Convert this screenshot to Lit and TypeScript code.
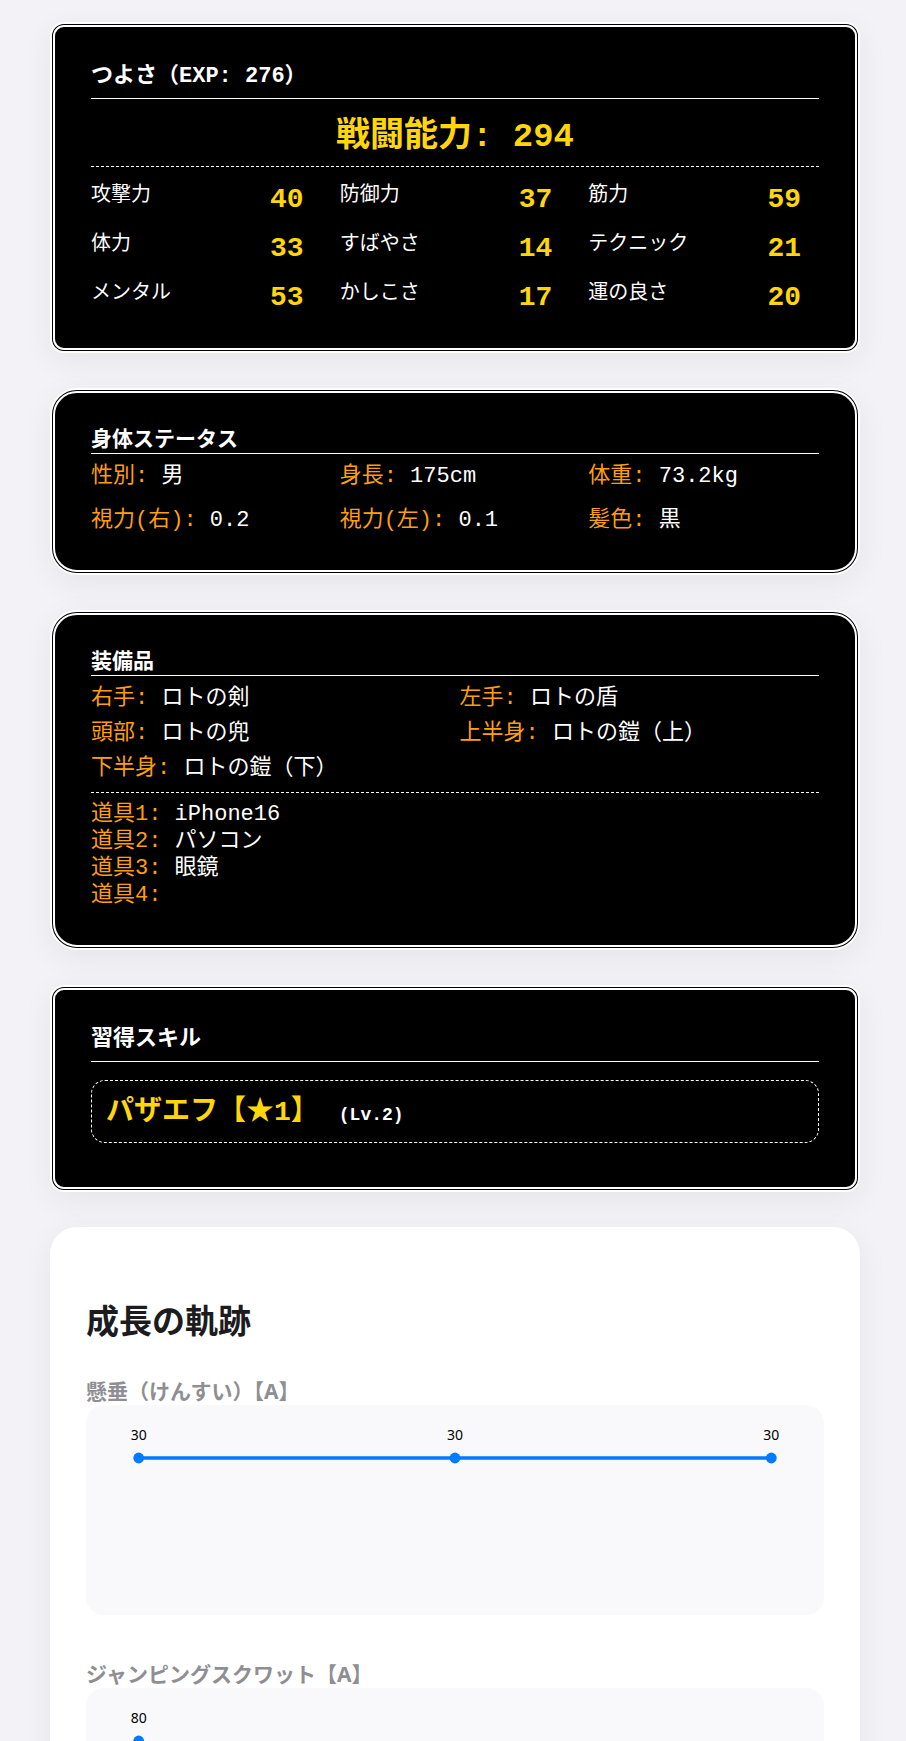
import { LitElement, html, svg, css } from "lit";
import { customElement, property } from "lit/decorators.js";

interface Entry {
  label: string;
  value: string | number;
}

const STATS: Entry[] = [
  { label: "攻撃力", value: 40 },
  { label: "防御力", value: 37 },
  { label: "筋力", value: 59 },
  { label: "体力", value: 33 },
  { label: "すばやさ", value: 14 },
  { label: "テクニック", value: 21 },
  { label: "メンタル", value: 53 },
  { label: "かしこさ", value: 17 },
  { label: "運の良さ", value: 20 },
];

const BODY: Entry[] = [
  { label: "性別", value: "男" },
  { label: "身長", value: "175cm" },
  { label: "体重", value: "73.2kg" },
  { label: "視力(右)", value: "0.2" },
  { label: "視力(左)", value: "0.1" },
  { label: "髪色", value: "黒" },
];

const EQUIPMENT: Entry[] = [
  { label: "右手", value: "ロトの剣" },
  { label: "左手", value: "ロトの盾" },
  { label: "頭部", value: "ロトの兜" },
  { label: "上半身", value: "ロトの鎧（上）" },
  { label: "下半身", value: "ロトの鎧（下）" },
];

const ITEMS: Entry[] = [
  { label: "道具1", value: "iPhone16" },
  { label: "道具2", value: "パソコン" },
  { label: "道具3", value: "眼鏡" },
  { label: "道具4", value: "" },
];

@customElement("growth-chart")
export class GrowthChart extends LitElement {
  @property({ type: Array }) values: number[] = [];

  static styles = css`
    :host {
      display: block;
      height: 210px;
      border-radius: 18px;
      background: #f9f9fb;
    }
    .plot {
      display: block;
      width: 100%;
      height: 100%;
    }
    .line {
      stroke: #007aff;
      stroke-width: 3.4;
    }
    .dot {
      fill: #007aff;
    }
    .value {
      font: 14px "Noto Sans", "Open Sans", sans-serif;
      text-anchor: middle;
      fill: #000;
    }
  `;

  render() {
    const max = Math.max(...this.values);
    const points = this.values.map((value, i) => ({
      value,
      x: `${7.14 + i * 42.86}%`,
      y: 53 + (1 - value / max) * 120,
    }));
    return html`<svg class="plot" role="img" aria-label="推移グラフ">
      ${points.slice(1).map(
        (p, i) => svg`<line class="line" x1=${points[i].x} y1=${points[i].y} x2=${p.x} y2=${p.y}></line>`
      )}
      ${points.map(
        (p) => svg`<circle class="dot" cx=${p.x} cy=${p.y} r="5.4"></circle>
          <text class="value" x=${p.x} y=${p.y - 18}>${p.value}</text>`
      )}
    </svg>`;
  }
}

@customElement("app-root")
export class AppRoot extends LitElement {
  static styles = css`
    :host {
      display: block;
      box-sizing: border-box;
      height: 100vh;
      overflow: hidden;
      padding: 22px 46px 0 50px;
      background: #f2f2f7;
      font-family: "Noto Sans", "Noto Sans CJK JP", sans-serif;
    }
    * {
      box-sizing: border-box;
    }
    h2,
    h3,
    dl,
    dd,
    p {
      margin: 0;
    }
    .page {
      display: flex;
      flex-direction: column;
      gap: 35px;
    }
    .card {
      padding: 36px;
      border-radius: 27px;
      box-shadow: 0 8px 32px rgba(0, 0, 0, 0.06);
      background: #fff;
    }
    .window {
      border: 5px double #fff;
      background: #000;
      color: #fff;
      font-family: "Courier New", "Liberation Mono", "Noto Sans CJK JP", monospace;
      font-size: 22px;
    }
    .compact {
      border-radius: 14px;
    }
    .heading {
      border-bottom: 1px solid #fff;
      font-size: 21px;
      line-height: 24px;
    }
    .roomy {
      padding-bottom: 7px;
      font-size: 22px;
      line-height: 28px;
    }
    .power {
      padding: 14px 0 4px;
      border-bottom: 1px dashed #fff;
      color: #ffd60a;
      font-size: 34px;
      font-weight: bold;
      line-height: 49px;
      text-align: center;
    }
    .grid {
      display: grid;
      grid-template-columns: repeat(3, 1fr);
      column-gap: 18px;
    }
    .stats {
      row-gap: 9px;
      padding-top: 7px;
      font-size: 20px;
    }
    .stat {
      display: flex;
      justify-content: space-between;
      height: 40px;
      padding-right: 18px;
      line-height: 44px;
    }
    .score {
      color: #ffd60a;
      font-size: 28px;
      font-weight: bold;
      line-height: 52px;
    }
    .body {
      row-gap: 18px;
      padding-top: 10px;
      line-height: 26px;
    }
    .pair {
      display: flex;
      white-space: pre;
    }
    .label {
      color: #ff9f0a;
    }
    .equipment {
      grid-template-columns: repeat(2, 1fr);
      gap: 9px;
      padding: 10px 0;
      border-bottom: 1px dashed #fff;
      line-height: 26px;
    }
    .items {
      padding-top: 8px;
      line-height: 27px;
    }
    .skill {
      display: flex;
      align-items: baseline;
      gap: 20px;
      margin: 18px 0 8px;
      padding: 11px 14px 6px;
      border: 1px dashed #fff;
      border-radius: 14px;
      font-weight: bold;
      line-height: 42px;
    }
    .name {
      color: #ffd60a;
      font-size: 28px;
    }
    .level {
      font-size: 18px;
    }
    .growth {
      padding-top: 70px;
    }
    .title {
      color: #1c1c1e;
      font-size: 33px;
      line-height: 48px;
      margin-bottom: 32px;
    }
    .exercise {
      margin-bottom: 45px;
    }
    .caption {
      color: #8e8e93;
      font-size: 21px;
      line-height: 28px;
    }
  `;

  private pairs(entries: Entry[]) {
    return entries.map(
      (e) => html`<div class="pair"><dt class="label">${e.label}: </dt><dd>${e.value}</dd></div>`
    );
  }

  render() {
    return html`<main class="page">
      <section class="card window compact">
        <h2 class="heading roomy">つよさ（EXP: 276）</h2>
        <p class="power">戦闘能力: 294</p>
        <dl class="grid stats">
          ${STATS.map(
            (s) => html`<div class="stat"><dt>${s.label}</dt><dd class="score">${s.value}</dd></div>`
          )}
        </dl>
      </section>

      <section class="card window">
        <h2 class="heading">身体ステータス</h2>
        <dl class="grid body">${this.pairs(BODY)}</dl>
      </section>

      <section class="card window">
        <h2 class="heading">装備品</h2>
        <dl class="grid equipment">${this.pairs(EQUIPMENT)}</dl>
        <dl class="items">${this.pairs(ITEMS)}</dl>
      </section>

      <section class="card window compact">
        <h2 class="heading roomy">習得スキル</h2>
        <div class="skill">
          <span class="name">パザエフ【★1】</span>
          <span class="level">(Lv.2)</span>
        </div>
      </section>

      <section class="card growth">
        <h2 class="title">成長の軌跡</h2>
        <div class="exercise">
          <h3 class="caption">懸垂（けんすい）【A】</h3>
          <growth-chart .values=${[30, 30, 30]}></growth-chart>
        </div>
        <div class="exercise">
          <h3 class="caption">ジャンピングスクワット【A】</h3>
          <growth-chart .values=${[80]}></growth-chart>
        </div>
      </section>
    </main>`;
  }
}
